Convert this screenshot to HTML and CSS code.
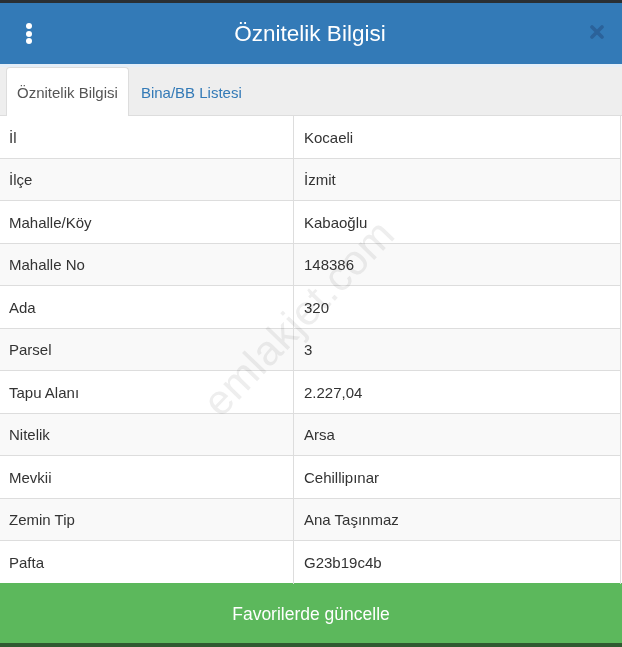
FILE: index.html
```html
<!DOCTYPE html>
<html lang="tr">
<head>
<meta charset="utf-8">
<link rel="stylesheet" href="styles.css">
</head>
<body>
<div class="page">
  <div class="topstrip"></div>
  <header class="header">
    <span class="kebab"><i></i><i></i><i></i></span>
    <h1 class="title">Öznitelik Bilgisi</h1>
    <svg class="close" width="14" height="14" viewBox="0 0 14 14"><path d="M2 2 L12 12 M12 2 L2 12" stroke="#2b629a" stroke-width="3.6" stroke-linecap="round"/></svg>
  </header>
  <div class="lightstrip"></div>
  <nav class="tabs">
    <div class="tab active">Öznitelik Bilgisi</div>
    <div class="tab link">Bina/BB Listesi</div>
  </nav>
  <div class="content">
    <div class="table">
      <div class="row"><div class="cell">İl</div><div class="cell">Kocaeli</div></div>
      <div class="row"><div class="cell">İlçe</div><div class="cell">İzmit</div></div>
      <div class="row"><div class="cell">Mahalle/Köy</div><div class="cell">Kabaoğlu</div></div>
      <div class="row"><div class="cell">Mahalle No</div><div class="cell">148386</div></div>
      <div class="row"><div class="cell">Ada</div><div class="cell">320</div></div>
      <div class="row"><div class="cell">Parsel</div><div class="cell">3</div></div>
      <div class="row"><div class="cell">Tapu Alanı</div><div class="cell">2.227,04</div></div>
      <div class="row"><div class="cell">Nitelik</div><div class="cell">Arsa</div></div>
      <div class="row"><div class="cell">Mevkii</div><div class="cell">Cehillipınar</div></div>
      <div class="row"><div class="cell">Zemin Tip</div><div class="cell">Ana Taşınmaz</div></div>
      <div class="row"><div class="cell">Pafta</div><div class="cell">G23b19c4b</div></div>
    </div>
    <div class="watermark">emlakjet.com</div>
  </div>
  <button class="save">Favorilerde güncelle</button>
  <div class="bottomstrip"></div>
</div>
</body>
</html>
```
FILE: styles.css
```css
* { box-sizing: border-box; }
html, body { margin: 0; padding: 0; }
body {
  font-family: "Liberation Sans", Arial, sans-serif;
  color: #333;
  background: #fff;
}
.page {
  width: 622px;
  height: 647px;
  display: flex;
  flex-direction: column;
  overflow: hidden;
}
.topstrip { height: 3px; background: #2a2f33; flex: none; }
.header {
  height: 61px;
  flex: none;
  background: #337ab7;
  display: flex;
  align-items: center;
  justify-content: center;
  position: relative;
}
.title {
  margin: 0;
  font-weight: normal;
  font-size: 22.5px;
  color: #fff;
  padding-right: 2px;
}
.kebab {
  position: absolute;
  left: 26px;
  top: 20px;
  display: flex;
  flex-direction: column;
  gap: 1.5px;
}
.kebab i {
  display: block;
  width: 6px;
  height: 6px;
  border-radius: 50%;
  background: #fff;
}
.close {
  position: absolute;
  right: 18px;
  top: 22px;
}
.lightstrip { height: 3px; background: #e4eef8; flex: none; }
.tabs {
  height: 49px;
  flex: none;
  background: #eee;
  border-bottom: 1px solid #ddd;
  display: flex;
  align-items: flex-end;
  padding-left: 6px;
}
.tab {
  height: 48px;
  font-size: 15px;
  display: flex;
  align-items: center;
  padding: 0 10px 0 10px;
  margin-bottom: -1px;
  border: 1px solid transparent;
  border-bottom: none;
  border-radius: 4px 4px 0 0;
}
.tab.active {
  background: #fff;
  border-color: #ddd;
  color: #555;
  height: 49px;
  padding-top: 1px;
}
.tab.link {
  color: #337ab7;
  padding-left: 11px;
}
.content {
  position: relative;
  flex: none;
  height: 467px;
}
.table {
  width: 621px;
  border-right: 1px solid #ddd;
}
.row {
  display: grid;
  grid-template-columns: 293px 1fr;
  height: 42.5px;
  border-bottom: 1px solid #ddd;
}
.row:nth-child(even) { background: #f9f9f9; }
.row:last-child { border-bottom: none; }
.cell {
  font-size: 15px;
  display: flex;
  align-items: center;
  padding-left: 9px;
  padding-top: 1px;
}
.cell + .cell {
  border-left: 1px solid #ddd;
  padding-left: 10px;
}
.watermark {
  position: absolute;
  left: 172px;
  top: 178px;
  font-size: 42px;
  color: #eeeeee;
  mix-blend-mode: multiply;
  transform: rotate(-46deg);
  pointer-events: none;
  letter-spacing: 0.5px;
}
.save {
  flex: none;
  height: 60px;
  width: 100%;
  border: none;
  margin: 0;
  background: #5cb85c;
  color: #fff;
  font-family: "Liberation Sans", Arial, sans-serif;
  font-size: 17.5px;
  padding: 3px 0 0 0;
}
.bottomstrip { flex: 1; background: #2f5a30; }
```
